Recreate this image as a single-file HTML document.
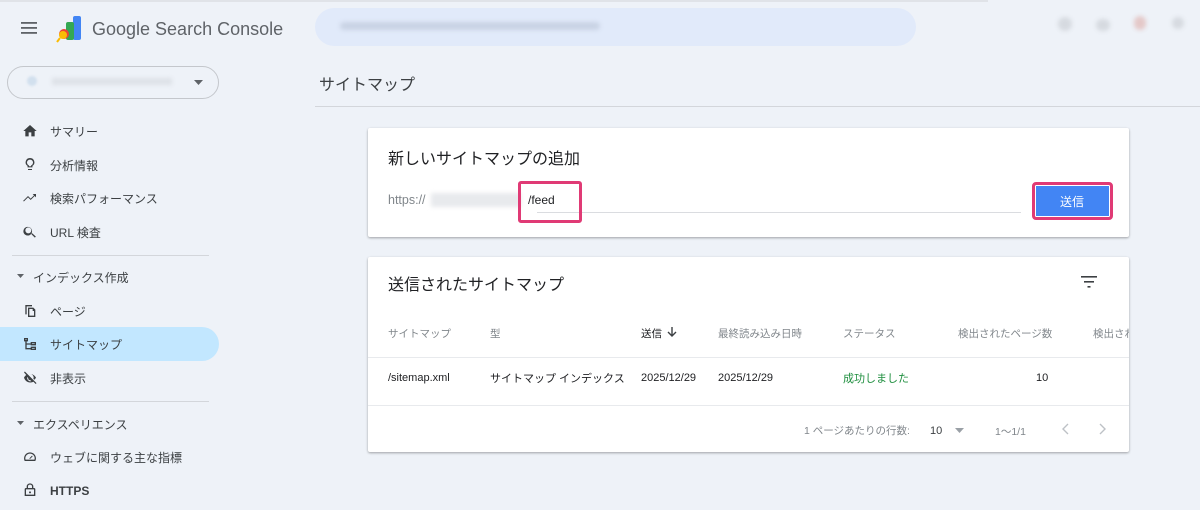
<!DOCTYPE html>
<html><head><meta charset="utf-8"><style>
*{margin:0;padding:0;box-sizing:border-box}
body{width:1200px;height:510px;overflow:hidden;background:#eef2f8;font-family:"Liberation Sans","Noto Sans CJK JP",sans-serif;color:#3c4043;position:relative}
.a{position:absolute;white-space:nowrap}
.nav{font-size:12px;color:#3c4043}
.ic{position:absolute;left:22px;width:16px;height:16px}
.card{position:absolute;background:#fff;box-shadow:0 1px 2px rgba(0,0,0,.25),0 1px 3px rgba(0,0,0,.1);border-radius:2px}
.th{font-size:10.5px;color:#80868b}
.td{font-size:11px;color:#202124}
</style></head><body>
<div class="a" style="left:0;top:0;width:988px;height:2px;background:#e0e3e8"></div>
<svg class="a" style="left:21px;top:22px" width="16" height="12"><rect y="0" width="16" height="1.8" fill="#5f6368"/><rect y="5" width="16" height="1.8" fill="#5f6368"/><rect y="10" width="16" height="1.8" fill="#5f6368"/></svg>
<svg class="a" style="left:56px;top:15px" width="28" height="28" viewBox="0 0 28 28"><rect x="17" y="1" width="8" height="24" rx="2" fill="#4285f4"/><rect x="10" y="7" width="8" height="18" rx="2" fill="#34a853"/><circle cx="8" cy="19" r="5" fill="#ea4335"/><circle cx="7" cy="20" r="4" fill="#fbbc04"/><line x1="4" y1="23" x2="1" y2="27" stroke="#fbbc04" stroke-width="2"/></svg>
<div class="a" style="left:92px;top:19px;font-size:18px;color:#5f6368">Google Search Console</div>
<div class="a" style="left:315px;top:8px;width:601px;height:38px;border-radius:19px;background:#e1eafa"></div>
<div class="a" style="left:340px;top:22px;width:260px;height:8px;border-radius:4px;background:#c9d3e4;filter:blur(2px)"></div>
<div class="a" style="left:1058px;top:17px;width:14px;height:14px;border-radius:7px;background:#d6dae0;filter:blur(2px)"></div>
<div class="a" style="left:1096px;top:19px;width:14px;height:12px;border-radius:6px;background:#d6dae0;filter:blur(2px)"></div>
<div class="a" style="left:1134px;top:16px;width:12px;height:14px;border-radius:6px;background:#e4c8c8;filter:blur(2px)"></div>
<div class="a" style="left:1172px;top:17px;width:12px;height:12px;border-radius:6px;background:#d6dae0;filter:blur(2px)"></div>
<div class="a" style="left:7px;top:66px;width:212px;height:33px;border:1px solid #c4c7cc;border-radius:17px"></div>
<div class="a" style="left:27px;top:76px;width:10px;height:10px;border-radius:5px;background:#d2e0ee;filter:blur(1px)"></div>
<div class="a" style="left:52px;top:78px;width:120px;height:7px;background:#dde1e7;filter:blur(2px)"></div>
<svg class="a" style="left:194px;top:80px" width="10" height="5"><path d="M0 0h9L4.5 5z" fill="#5f6368"/></svg>
<svg class="ic" style="top:123px" viewBox="0 0 24 24"><path d="M10 20v-6h4v6h5v-8h3L12 3 2 12h3v8z" fill="#3c4043"/></svg>
<div class="a nav" style="left:50px;top:123px">サマリー</div>
<svg class="ic" style="top:156px" viewBox="0 0 24 24"><path d="M9 21h6v-1.5H9zM12 3a6.5 6.5 0 0 0-3.7 11.9V17h7.4v-2.1A6.5 6.5 0 0 0 12 3zm2.2 10.8-.7.5V15.4h-3v-1.1l-.7-.5A4.5 4.5 0 1 1 14.2 13.8z" fill="#3c4043"/></svg>
<div class="a nav" style="left:50px;top:157px">分析情報</div>
<svg class="ic" style="top:190px" viewBox="0 0 24 24"><path d="M3 17l6-6 4 4 6-6 2 2V6h-5l2 2-5 5-4-4-7.5 7.5z" fill="#3c4043"/></svg>
<div class="a nav" style="left:50px;top:190px">検索パフォーマンス</div>
<svg class="ic" style="top:224px" viewBox="0 0 24 24"><path d="M15.5 14h-.8l-.3-.3A6.5 6.5 0 1 0 14 14.4l.3.3v.8l5 5 1.5-1.5zm-6 0a4.5 4.5 0 1 1 0-9 4.5 4.5 0 0 1 0 9z" fill="#3c4043"/></svg>
<div class="a nav" style="left:50px;top:224px">URL 検査</div>
<div class="a" style="left:12px;top:255px;width:197px;height:1px;background:#d3d6db"></div>
<svg class="a" style="left:17px;top:274px" width="7" height="4"><path d="M0 0h7L3.5 4z" fill="#5f6368"/></svg>
<div class="a nav" style="left:33px;top:269px">インデックス作成</div>
<svg class="ic" style="top:303px" viewBox="0 0 24 24"><path d="M15 3H5v14h2V5h8zm2 4H9v14h11V10zM11 9h5v3h2v7h-7z" fill="#3c4043"/></svg>
<div class="a nav" style="left:50px;top:303px">ページ</div>
<div class="a" style="left:0;top:327px;width:219px;height:34px;background:#c2e7ff;border-radius:0 17px 17px 0"></div>
<svg class="ic" style="top:336px" viewBox="0 0 24 24"><path d="M3 3h6v5H3zM5 5v1h2V5zM13 9h8v5h-8zm2 2v1h4v-1zM13 16h8v5h-8zm2 2v1h4v-1zM5 8h2v3h6v2H7v5h6v2H5z" fill="#3c4043"/></svg>
<div class="a nav" style="left:50px;top:336px">サイトマップ</div>
<svg class="ic" style="top:370px" viewBox="0 0 24 24"><path d="M12 6c3.8 0 7.2 2.1 9 5.5-.6 1.2-1.5 2.3-2.5 3.2L17 13.3c.3-.5.5-1.1.5-1.8A5.5 5.5 0 0 0 10.2 6.3zM3 3.5 4.3 2.2 21.8 19.7 20.5 21l-3.3-3.3A10 10 0 0 1 3 11.5c.8-1.6 2-3 3.4-4zM12 17a5.5 5.5 0 0 0 2-.3l-1.6-1.6a2.5 2.5 0 0 1-3-3L7.8 10.5A5.5 5.5 0 0 0 12 17z" fill="#3c4043"/></svg>
<div class="a nav" style="left:50px;top:370px">非表示</div>
<div class="a" style="left:12px;top:401px;width:197px;height:1px;background:#d3d6db"></div>
<svg class="a" style="left:17px;top:421px" width="7" height="4"><path d="M0 0h7L3.5 4z" fill="#5f6368"/></svg>
<div class="a nav" style="left:33px;top:416px">エクスペリエンス</div>
<svg class="ic" style="top:449px" viewBox="0 0 24 24"><path d="M12 5a9 9 0 0 0-8 13h16A9 9 0 0 0 12 5zm6.7 11H5.3A7 7 0 0 1 12 7a7 7 0 0 1 6.7 9zM11 14l4-4 1 1-4 4z" fill="#3c4043"/></svg>
<div class="a nav" style="left:50px;top:449px">ウェブに関する主な指標</div>
<svg class="ic" style="top:482px" viewBox="0 0 24 24"><path d="M18 9h-1V7a5 5 0 0 0-10 0v2H6a2 2 0 0 0-2 2v10h16V11a2 2 0 0 0-2-2zM9 7a3 3 0 0 1 6 0v2H9zm9 12H6v-8h12zm-6-2a1.5 1.5 0 1 0 0-3 1.5 1.5 0 0 0 0 3z" fill="#3c4043"/></svg>
<div class="a nav" style="left:50px;top:484px;font-weight:bold">HTTPS</div>
<div class="a" style="left:319px;top:71px;font-size:16px;color:#3c4043">サイトマップ</div>
<div class="a" style="left:315px;top:106px;width:885px;height:1px;background:#d3d6db"></div>
<div class="card" style="left:368px;top:128px;width:761px;height:109px"></div>
<div class="a" style="left:388px;top:145px;font-size:16px;color:#202124">新しいサイトマップの追加</div>
<div class="a" style="left:388px;top:193px;font-size:12.5px;color:#80868b">https://</div>
<div class="a" style="left:431px;top:193px;width:90px;height:14px;background:#e8eaed;filter:blur(2px)"></div>
<div class="a" style="left:528px;top:193px;font-size:12px;color:#202124">/feed</div>
<div class="a" style="left:537px;top:212px;width:484px;height:1px;background:#dadce0"></div>
<div class="a" style="left:518px;top:181px;width:64px;height:42px;border:3px solid #e03a75;border-radius:3px"></div>
<div class="a" style="left:1032px;top:182px;width:81px;height:38px;border:3px solid #e03a75;border-radius:4px;background:#4285f4;box-shadow:inset 0 0 0 1px #fff"></div>
<div class="a" style="left:1060px;top:193px;font-size:12px;color:#fff">送信</div>
<div class="card" style="left:368px;top:257px;width:761px;height:195px"></div>
<div class="a" style="left:388px;top:271px;font-size:16px;color:#202124">送信されたサイトマップ</div>
<svg class="a" style="left:1081px;top:276px" width="16" height="12"><rect y="0" width="16" height="1.6" fill="#3c4043"/><rect x="3" y="5" width="10" height="1.6" fill="#3c4043"/><rect x="6.5" y="10" width="3" height="1.6" fill="#3c4043"/></svg>
<div class="a th" style="left:388px;top:326px">サイトマップ</div>
<div class="a th" style="left:490px;top:326px">型</div>
<div class="a th" style="left:641px;top:326px;color:#202124">送信</div>
<svg class="a" style="left:667px;top:327px" width="10" height="11" viewBox="0 0 10 11"><path d="M5 0v9M1 5l4 4 4-4" stroke="#3c4043" stroke-width="1.4" fill="none"/></svg>
<div class="a th" style="left:718px;top:326px">最終読み込み日時</div>
<div class="a th" style="left:843px;top:326px">ステータス</div>
<div class="a th" style="left:958px;top:326px">検出されたページ数</div>
<div class="a th" style="left:1093px;top:326px;width:36px;overflow:hidden">検出された</div>
<div class="a" style="left:368px;top:357px;width:761px;height:1px;background:#e8eaed"></div>
<div class="a td" style="left:388px;top:372px">/sitemap.xml</div>
<div class="a td" style="left:490px;top:370px">サイトマップ インデックス</div>
<div class="a td" style="left:641px;top:372px">2025/12/29</div>
<div class="a td" style="left:718px;top:372px">2025/12/29</div>
<div class="a td" style="left:843px;top:370px;color:#1e8e3e">成功しました</div>
<div class="a td" style="left:1036px;top:372px">10</div>
<div class="a" style="left:368px;top:405px;width:761px;height:1px;background:#e8eaed"></div>
<div class="a th" style="left:804px;top:423px">1 ページあたりの行数:</div>
<div class="a td" style="left:930px;top:425px;color:#3c4043">10</div>
<svg class="a" style="left:955px;top:428px" width="9" height="5"><path d="M0 0h9L4.5 5z" fill="#9aa0a6"/></svg>
<div class="a th" style="left:995px;top:424px">1〜1/1</div>
<svg class="a" style="left:1062px;top:423px" width="8" height="12"><path d="M6 1 1 6l5 5" stroke="#bdc1c6" stroke-width="1.4" fill="none"/></svg>
<svg class="a" style="left:1098px;top:423px" width="8" height="12"><path d="M2 1l5 5-5 5" stroke="#bdc1c6" stroke-width="1.4" fill="none"/></svg>
</body></html>
